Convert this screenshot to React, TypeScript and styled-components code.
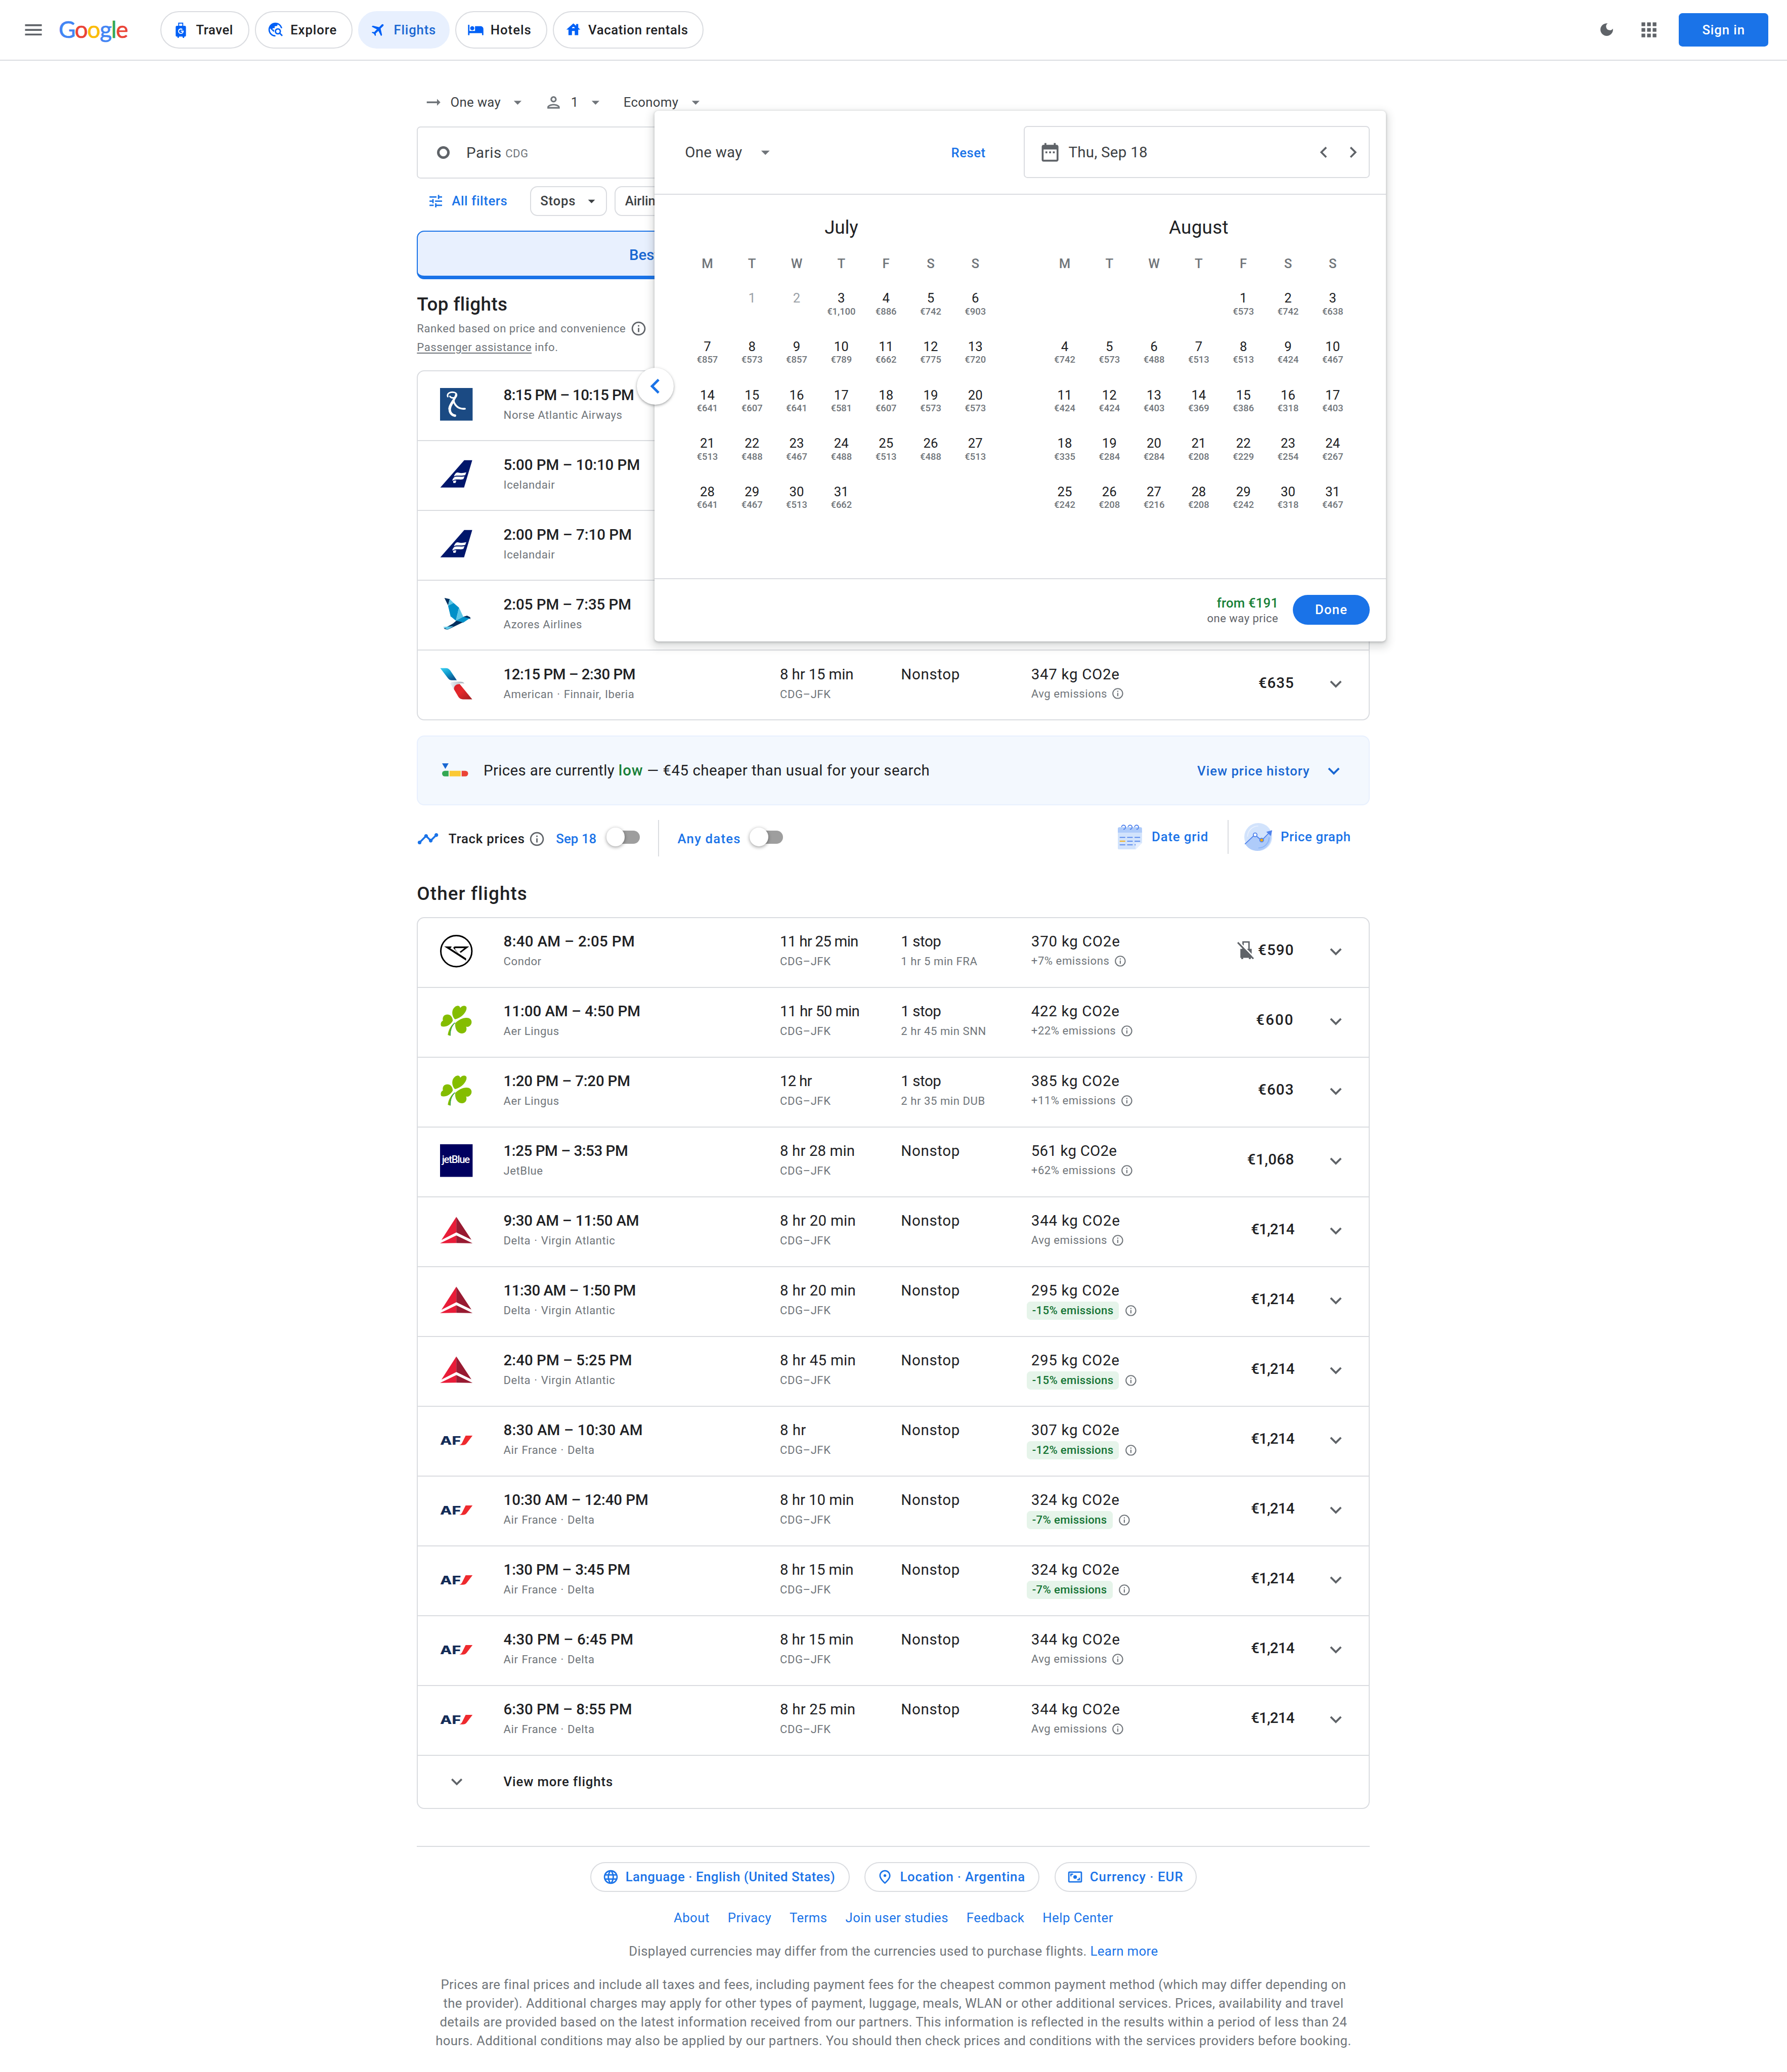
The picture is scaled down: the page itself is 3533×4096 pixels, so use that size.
import React, { useLayoutEffect, useRef } from "react";
import styled, { createGlobalStyle, css } from "styled-components";
import {
  MdApps,
  MdArrowDropDown,
  MdArrowRightAlt,
  MdChevronLeft,
  MdChevronRight,
  MdDarkMode,
  MdDateRange,
  MdExpandMore,
  MdFlight,
  MdHotel,
  MdHouse,
  MdLanguage,
  MdMenu,
  MdOutlineInfo,
  MdOutlinePerson,
  MdOutlinePlace,
  MdTimeline,
  MdTravelExplore,
  MdTune,
} from "react-icons/md";

const color = {
  ink: "#202124",
  body: "#3c4043",
  muted: "#70757a",
  icon: "#5f6368",
  faint: "#9aa0a6",
  line: "#dadce0",
  blue: "#1a73e8",
  deepBlue: "#1967d2",
  tint: "#e8f0fe",
  green: "#188038",
};

const hairline = `1.1px solid ${color.line}`;

const GlobalStyle = createGlobalStyle`
  html, body { margin: 0; background: #fff; overflow: hidden; }
  * { box-sizing: border-box; }
  svg { display: block; flex: none; }
`;

const Page = styled.div`
  position: relative;
  zoom: 1.84;
  width: 1920px;
  height: 2226px;
  overflow: hidden;
  background: #fff;
  color: ${color.ink};
  font-family: Roboto, "Liberation Sans", sans-serif;
  font-size: 14px;
`;

/* ---------- text ---------- */

const FitSpan = styled.span`
  white-space: nowrap;
`;

/** A single line of text tracked so that it sets to the given width. */
function Fit({ w, children }: { w: number; children: string }) {
  const ref = useRef<HTMLSpanElement>(null);
  useLayoutEffect(() => {
    const el = ref.current;
    const ctx = document.createElement("canvas").getContext("2d");
    if (!el || !ctx) return;
    const style = getComputedStyle(el);
    ctx.font = `${style.fontWeight} 100px ${style.fontFamily}`;
    const natural = (ctx.measureText(children).width * parseFloat(style.fontSize)) / 100;
    el.style.letterSpacing = `${(w - natural) / children.length}px`;
  }, [w, children]);
  return <FitSpan ref={ref}>{children}</FitSpan>;
}

/* ---------- header ---------- */

const Header = styled.header`
  display: flex;
  align-items: center;
  height: 65px;
  padding: 0 20px 0 24px;
  border-bottom: ${hairline};
  color: ${color.icon};
`;

const Logo = styled.div`
  width: 109.5px;
  margin: -1px 0 0 15px;
  font: 400 25px/30px Lato, sans-serif;
  -webkit-text-stroke: 0.35px currentColor;
  letter-spacing: -0.75px;
`;

const Tint = styled.span<{ $c: string }>`
  color: ${(p) => p.$c};
`;

const Nav = styled.nav`
  display: flex;
  gap: 6px;
`;

const NavChip = styled.a<{ $w: number; $active?: boolean }>`
  display: flex;
  align-items: center;
  gap: 7px;
  width: ${(p) => p.$w}px;
  height: 40px;
  padding-left: 12px;
  border: 1.1px solid ${(p) => (p.$active ? color.tint : color.line)};
  border-radius: 20px;
  background: ${(p) => (p.$active ? color.tint : "#fff")};
  color: ${(p) => (p.$active ? color.deepBlue : color.ink)};
  font-weight: 500;
  white-space: nowrap;
  svg {
    color: #0060f6;
  }
`;

const HeaderTools = styled.div`
  display: flex;
  align-items: center;
  margin-left: auto;
`;

const Moon = styled(MdDarkMode)`
  margin-right: 24px;
`;

const SignIn = styled.button`
  width: 96px;
  height: 36px;
  margin-left: 20.5px;
  border: 0;
  border-radius: 4px;
  background: ${color.blue};
  color: #fff;
  font: 500 14px Roboto, sans-serif;
`;

const LuggageIcon = () => (
  <svg width="18" height="18" viewBox="0 0 24 24">
    <path
      fill="currentColor"
      fillRule="evenodd"
      d="M8.2 2h7.2v4.600h2.200c1 0 1.700.7 1.700 1.700v12c0 1-.7 1.700-1.700 1.700h-.5l-.6 2h-1.500l-.7-2h-4.800l-.7 2H7.500L6.900 22h-.6c-1 0-1.700-.7-1.700-1.700v-12c0-1 .7-1.700 1.700-1.700h1.900zM9.600 3.400v3.200h4.400V3.400zM12 10.200a4 4 0 1 0 4 4.700v-1.400h-4v1.500h2.400a2.500 2.500 0 1 1-.8-2.500l1-1.100a4 4 0 0 0-2.600-1.200z"
    />
  </svg>
);

const Tilted = styled.span`
  display: flex;
  transform: rotate(45deg);
`;

/* ---------- search form ---------- */

const Main = styled.main`
  width: 1024px;
  margin: 0 auto;
  padding-top: 27px;
`;

const Row = styled.div`
  display: flex;
  align-items: center;
`;

const Options = styled(Row)`
  height: 36px;
  padding-left: 7px;
  color: ${color.body};
  svg {
    color: ${color.muted};
  }
`;

const Option = styled(Row)<{ $w: number; $caret: number; $gap?: number }>`
  width: ${(p) => p.$w}px;
  & > span {
    margin-left: ${(p) => p.$gap ?? 0}px;
  }
  & > svg:last-child {
    margin-left: ${(p) => p.$caret}px;
  }
`;

const SearchBox = styled(Row)`
  height: 56px;
  margin-top: 8px;
  padding-left: 20.5px;
  border: ${hairline};
  border-radius: 4px;
  color: ${color.body};
  font-size: 16px;
`;

const OriginDot = styled.i`
  width: 13.5px;
  height: 13.5px;
  margin-right: 18px;
  border: 2.8px solid ${color.icon};
  border-radius: 50%;
`;

const Code = styled.small`
  padding: 2px 0 0 4px;
  color: ${color.muted};
  font-size: 12px;
`;

const Filters = styled(Row)`
  height: 32px;
  margin-top: 8px;
  padding-left: 11.5px;
  gap: 8.5px;
  font-weight: 500;
`;

const AllFilters = styled(Row)`
  width: 101.5px;
  gap: 8px;
  color: ${color.blue};
`;

const FilterChip = styled(Row)<{ $w: number }>`
  width: ${(p) => p.$w}px;
  height: 32px;
  padding: 0 6.5px 0 10px;
  justify-content: space-between;
  border: ${hairline};
  border-radius: 8px;
  color: ${color.body};
`;

const Tabs = styled.div`
  display: grid;
  grid-template-columns: 1fr 1fr;
  height: 52px;
  margin-top: 16px;
  border: ${hairline};
  border-radius: 8px;
`;

const BestTab = styled.div`
  margin: -1.1px;
  padding: 13px 0 0 227px;
  border: 1.1px solid ${color.blue};
  border-bottom-width: 4px;
  border-radius: 8px 0 0 8px;
  background: ${color.tint};
  color: ${color.deepBlue};
  font: 500 16px/24px Roboto, sans-serif;
`;

/* ---------- flight lists ---------- */

const Heading = styled.h2<{ $top: number }>`
  margin: ${(p) => p.$top}px 0 0;
  font: 500 20px/24px Roboto, sans-serif;
`;

const Notes = styled.div`
  margin-top: 4px;
`;

const Note = styled(Row)`
  height: 20px;
  gap: 4.5px;
  color: ${color.muted};
  font-size: 12px;
  letter-spacing: 0.3px;
  white-space: pre;
  u {
    text-underline-offset: 1.5px;
  }
  svg {
    color: ${color.icon};
  }
`;

const FlightList = styled.section<{ $top: number }>`
  margin-top: ${(p) => p.$top}px;
  border: ${hairline};
  border-radius: 8px;
`;

const FlightRow = styled.article`
  display: grid;
  grid-template-columns: 68px 297px 130px 140px 160px 1fr 80.3px;
  height: 75px;
  padding-left: 24px;
  border-bottom: ${hairline};
  &:last-child {
    height: 74px;
    border-bottom: 0;
  }
`;

const AirlineLogo = styled.div`
  width: 35px;
  height: 35px;
  margin-top: 18px;
`;

const Cell = styled.div<{ $strong?: boolean }>`
  padding-top: 13.5px;
  font-size: 16px;
  line-height: 24px;
  font-weight: ${(p) => (p.$strong ? 500 : 400)};
  white-space: nowrap;
`;

const Sub = styled.div<{ $top?: number; $wide?: boolean }>`
  display: flex;
  align-items: center;
  height: 18px;
  margin-top: ${(p) => p.$top ?? 0.3}px;
  gap: 4.5px;
  color: ${color.muted};
  font-size: 12px;
  font-weight: 400;
  line-height: 18px;
  letter-spacing: 0.3px;
  word-spacing: ${(p) => (p.$wide ? 0.6 : 0)}px;
`;

const GreenBadge = styled.span`
  height: 20px;
  margin-left: -5px;
  margin-right: 1px;
  padding: 0 6px;
  border-radius: 4px;
  background: #e6f4ea;
  color: #137333;
  font-weight: 500;
  line-height: 20px;
  letter-spacing: 0.2px;
`;

const Price = styled(Row)`
  justify-content: flex-end;
  gap: 4px;
  height: 69px;
  font-size: 16px;
  font-weight: 500;
  svg {
    color: ${color.icon};
  }
`;

const NoCarryOnIcon = () => (
  <svg width="18" height="20" viewBox="0 0 18 20">
    <path fill="none" stroke="currentColor" strokeWidth="1.500" d="M6.300 9V1.200h6.400V9" />
    <path fill="currentColor" d="M3.400 8.600h12.200v9.600h-1V20h-2v-1.800H6.400V20h-2v-1.800h-1z" />
    <path stroke="#fff" strokeWidth="1.500" d="M1.700.7 18.500 18" />
    <path stroke="currentColor" strokeWidth="1.700" d="M.6 1.700 17.400 19.200" />
  </svg>
);

const Expand = styled.div`
  padding: 23.5px 0 0 32px;
  color: ${color.icon};
`;

const MoreRow = styled(Row)`
  height: 56px;
  padding-left: 29.7px;
  gap: 38.3px;
  font-weight: 500;
  svg {
    color: ${color.icon};
  }
`;

/* ---------- price insights ---------- */

const InsightCard = styled(Row)`
  height: 75px;
  margin-top: 16px;
  padding: 0 25.5px 0 26px;
  border: 1.1px solid ${color.tint};
  border-radius: 8px;
  background: #f3f8fe;
  font-size: 16px;
`;

const InsightText = styled.span`
  margin-left: 16.5px;
  b {
    color: ${color.green};
    font-weight: 500;
  }
`;

const HistoryLink = styled(Row)`
  margin-left: auto;
  padding-top: 1px;
  gap: 13px;
  color: ${color.deepBlue};
  font-size: 14px;
  font-weight: 500;
`;

const TrackRow = styled(Row)`
  height: 40px;
  margin-top: 16px;
  font-weight: 500;
`;

const TrackLabel = styled.span`
  margin: 0 4px 0 10px;
`;

const BlueText = styled.span<{ $l: number }>`
  margin-left: ${(p) => p.$l}px;
  color: ${color.blue};
`;

const ToggleTrack = styled.span<{ $l: number }>`
  width: 35px;
  height: 14px;
  margin-left: ${(p) => p.$l}px;
  margin-top: -3.5px;
  border-radius: 7px;
  background: #9e9e9e;
`;

const ToggleThumb = styled.span`
  display: block;
  width: 20px;
  height: 20px;
  margin: -3px 0 0 -1px;
  border-radius: 50%;
  background: #fff;
  box-shadow: 0 1px 4px rgba(0, 0, 0, 0.4);
`;

const Toggle = ({ left }: { left: number }) => (
  <ToggleTrack $l={left}>
    <ToggleThumb />
  </ToggleTrack>
);

const Rule = styled.i<{ $h: number; $m: string }>`
  align-self: flex-start;
  width: 1.1px;
  height: ${(p) => p.$h}px;
  margin: ${(p) => p.$m};
  background: ${color.line};
`;

const ToolLinks = styled(Row)`
  margin: -4px 20.5px 0 auto;
  height: 40px;
`;

const CalendarArt = () => (
  <svg width="26" height="27" viewBox="0 0 156 160">
    <path fill="#d2e3fc" d="M0 40h156v78l-42 42H10q-10 0-10-10z" />
    <path fill="#aecbfa" d="M10 16h136q10 0 10 10v25H0V26q0-10 10-10z" />
    <path fill="#e8f0fe" d="M114 160v-32q0-10 10-10h32z" />
    <g fill="none" stroke="#4f82ec" strokeWidth="6">
      <path d="M24 15a13 13 0 1 1 12 14M66 15a13 13 0 1 1 12 14M108 15a13 13 0 1 1 12 14" />
      <path d="M12 82h36M60 82h36M108 82h36M60 106h36M108 106h36M12 130h36M60 130h36M108 130h7" />
      <path stroke="#f9ab00" d="M12 106h36" />
    </g>
  </svg>
);

const GraphArt = () => (
  <svg width="30" height="30" viewBox="0 0 180 180">
    <circle cx="90" cy="90" r="90" fill="#d2e3fc" />
    <path fill="#aecbfa" d="M5 134 68 72l44 38 58-44A90 90 0 0 1 5 134z" />
    <g fill="none" strokeWidth="6">
      <path stroke="#e8f0fe" d="M21 88a69 69 0 0 1 69-69" />
      <path stroke="#8ab4f8" d="M160 92a69 69 0 0 1-69 69" />
      <path stroke="#4f82ec" d="M4 136 62 81M78 84l26 22M120 104l44-44" />
      <circle cx="70" cy="76" r="12" stroke="#4f82ec" fill="#fff" />
      <circle cx="112" cy="110" r="12" stroke="#4f82ec" fill="#f9ab00" />
    </g>
    <path fill="#4f82ec" d="m180 46-8 38-30-27z" />
  </svg>
);

const GaugeArt = () => (
  <svg width="28" height="15" viewBox="0 0 28 15">
    <path fill={color.deepBlue} d="M0 0h7L3.500 6z" />
    <path fill="#34a853" d="M3 8h4v6H3a3 3 0 0 1 0-6z" />
    <path fill="#fbc934" d="M8 8h12v6H8z" />
    <path fill="#ea4335" d="M21 8h4a3 3 0 0 1 0 6h-4z" />
  </svg>
);

/* ---------- airline marks ---------- */

const MarkSvg = styled.svg`
  width: 35px;
  height: 35px;
  overflow: visible;
`;

const Mark = ({ children }: { children: React.ReactNode }) => <MarkSvg viewBox="0 0 35 35">{children}</MarkSvg>;

const marks: Record<string, React.ReactNode> = {
  norse: (
    <Mark>
      <path fill="#1b4a83" d="M0 0h35v35H0z" />
      <g fill="none" stroke="#fff" strokeLinecap="round" strokeLinejoin="round">
        <path strokeWidth="1.600" d="M8.300 9.300C7 5.500 11.500 4 15 4.700c3.800.9 3.500 4.800.2 5.700-2 .6-3.800-.2-4.600-1.400" />
        <path strokeWidth="2.300" d="M17.300 7c-.4 4.500-6 8.500-7.300 15" />
        <path strokeWidth="2.700" d="M14.500 14c-3.300 4-5 7.300-3.800 11.200.8 2.500 2.600 4 5.300 4.500" />
        <path strokeWidth="2" d="M14.500 14c1.700 5 5 8.900 12.200 8.300" />
      </g>
    </Mark>
  ),
  icelandair: (
    <Mark>
      <path fill="#00166b" d="M26 2.600h8.600L25.800 32H.3z" />
      <path
        fill="#fff"
        d="M19 15.800c3 1 6 .6 9.200-.2l-1.200 3c-3.600 1-6.500.3-9.500.6-1.200.1-2 .6-2.600 1 .6-2 2-4.500 4.100-4.400zM16.500 20.400c3.400-.4 6.700.5 9.800-.4l-1.200 2.800c-2.500 1-5 .2-7.500.5-2 .2-3.500.8-4.500 1.400.5-2 1.600-4 3.400-4.300zM14 25c1-.5 2.200-.6 3.500-.5l-.9 2.500h-2.300z"
      />
    </Mark>
  ),
  azores: (
    <Mark>
      <path fill="#00305f" d="m4.700.5 5.700 1.300-1.800 6.700z" />
      <path fill="#5cc6e6" d="m10.400 1.800 4.200 4.200-6 3z" />
      <path fill="#0090c8" d="m14.600 6 5.800 5-3.400 14-5.700-4.800L8.600 9z" />
      <path fill="#5cc6e6" d="M20.400 11 25 20.800 17 25z" />
      <path fill="#0090c8" d="m17 25 8-4.200 7.300 1.400L25 27l-8-.4z" />
      <path fill="#00305f" d="m25 20.800 4-1.200 3.500 1.800v2.300l-1-1.200zM4 33.500 14 28l3.500-3 7 1.800L8 34.800z" />
      <path fill="#5cc6e6" d="m3.300 31.800 11.200-.9L8 34.800z" />
    </Mark>
  ),
  american: (
    <Mark>
      <defs>
        <linearGradient id="aaBlue" x1="0" y1="0" x2=".6" y2="1">
          <stop offset="0" stopColor="#3fd0f2" />
          <stop offset=".5" stopColor="#109fd0" />
          <stop offset="1" stopColor="#0c558f" />
        </linearGradient>
        <linearGradient id="aaRed" x1="0" y1="0" x2="1" y2="1">
          <stop offset="0" stopColor="#d9202b" />
          <stop offset=".45" stopColor="#e4282b" />
          <stop offset="1" stopColor="#9f1d21" />
        </linearGradient>
        <linearGradient id="aaGrey" x1="0" y1="0" x2="1" y2="0">
          <stop offset="0" stopColor="#eef1f6" />
          <stop offset="1" stopColor="#9dabb5" />
        </linearGradient>
      </defs>
      <path fill="url(#aaBlue)" d="M.2.900h6c2 0 3.300.8 4.600 2.400L18 14h-5.200c-1.900 0-3.300-.8-4.500-2.500z" />
      <path fill="url(#aaGrey)" d="M11 17.500c.6-1.400 2-2 4-2h6.500c2 0 3.800.6 4.700 2-3-.5-6-.2-8 1-2 1-3 2.600-3.200 5.500z" />
      <path fill="url(#aaRed)" d="M15 23.800c-.3-3 1.500-5.500 6-5.800L34.600 34.500H24.500c-2 0-3.500-.8-4.700-2.500z" />
    </Mark>
  ),
  condor: (
    <Mark>
      <circle cx="17.500" cy="17.500" r="16.700" fill="#fff" stroke="#000" strokeWidth="1.600" />
      <path d="M4.500 12.500h8l-1 1.800h-.8l17.300 11v2.400z" />
      <path d="M14.300 14.300c0-1.200.8-1.800 2-1.800h15l-9 6.800-1.300-1 5.200-4h-9.400c-1 0-.9.9.2 2.300l4 4.700z" />
    </Mark>
  ),
  aerlingus: (
    <Mark>
      <g fill="#84bd00">
        <path d="M16 15.800C12.200 12 12 5 16.500 2 19 .6 21 .9 21.700 3.500 23.600.8 28 .2 28.500 3.300 28.700 8.500 22.500 14.500 16 15.800z" />
        <path d="M13.700 17.200C13.500 13 11 10.600 8 10.600c-4 0-5.700 3-4.900 6.600C1 18 .1 21 1.400 23.300 6 24.700 11.500 21.600 13.700 17.200z" />
        <path d="M16.300 20c3.700-4.200 10.500-7 14.800-5.400 4 1.700 3.600 7-.1 8.900-1 .5-2 .5-3 .2 1.500 4.300-1 7.300-4.500 7.300-5-.2-7.700-5-7.200-11z" />
      </g>
      <path fill="#84bd00" d="M16 19.300C12 21.500 9 27 8.300 32.600l2.900.9c-.2-6 1.300-10 4.800-13.500z" />
      <path fill="none" stroke="#2fa04e" strokeWidth=".8" d="M16 19.500c-3.700 3-5.200 8-5.100 13.800" />
    </Mark>
  ),
  jetblue: (
    <Mark>
      <path fill="#00005f" d="M0 0h35v35H0z" />
      <text x="2" y="20.300" fill="#fff" fontFamily="Roboto, sans-serif" fontWeight="500" fontSize="11" letterSpacing="-0.65">
        jetBlue
      </text>
    </Mark>
  ),
  delta: (
    <Mark>
      <path fill="#e81c38" d="M17.500 3v16.700L1.500 27.800zM17.500 22.900v8.200L0 31.400z" />
      <path fill="#981a31" d="M17.500 3v16.700l16.200 7.900zM17.500 22.900v8.200l17.500.3z" />
    </Mark>
  ),
  airfrance: (
    <Mark>
      <text x="0" y="23.100" fill="#142c57" fontFamily="Inter, sans-serif" fontWeight="800" fontSize="12.500" textLength="22.400" lengthAdjust="spacingAndGlyphs">
        AF
      </text>
      <path fill="#ee2a2e" d="M27.500 13h7.400l-6.300 8.300c-1.200 1.500-2.300 1.900-4 1.900h-4c1.300-.2 2-.8 2.800-1.900z" />
    </Mark>
  ),
};

/* ---------- flight data ---------- */

type Flight = {
  mark: keyof typeof marks;
  time: string;
  timeW: number;
  airline: string;
  duration?: string;
  durationW?: number;
  stops?: string;
  layover?: string;
  co2?: string;
  co2W?: number;
  delta?: string;
  price?: string;
  priceW?: number;
  noBags?: boolean;
};

const topFlights: Flight[] = [
  { mark: "norse", time: "8:15 PM – 10:15 PM", timeW: 140, airline: "Norse Atlantic Airways" },
  { mark: "icelandair", time: "5:00 PM – 10:10 PM", timeW: 146.5, airline: "Icelandair" },
  { mark: "icelandair", time: "2:00 PM – 7:10 PM", timeW: 137.7, airline: "Icelandair" },
  { mark: "azores", time: "2:05 PM – 7:35 PM", timeW: 137.2, airline: "Azores Airlines" },
  { mark: "american", time: "12:15 PM – 2:30 PM", timeW: 141.5, airline: "American · Finnair, Iberia", duration: "8 hr 15 min", durationW: 79, stops: "Nonstop", co2: "347 kg CO2e", co2W: 95, delta: "Avg emissions", price: "€635", priceW: 38.5 },
];

const otherFlights: Flight[] = [
  { mark: "condor", time: "8:40 AM – 2:05 PM", timeW: 141, airline: "Condor", duration: "11 hr 25 min", durationW: 84, stops: "1 stop", layover: "1 hr 5 min FRA", co2: "370 kg CO2e", co2W: 95.5, delta: "+7% emissions", price: "€590", priceW: 39, noBags: true },
  { mark: "aerlingus", time: "11:00 AM – 4:50 PM", timeW: 147, airline: "Aer Lingus", duration: "11 hr 50 min", durationW: 85.5, stops: "1 stop", layover: "2 hr 45 min SNN", co2: "422 kg CO2e", co2W: 95, delta: "+22% emissions", price: "€600", priceW: 41 },
  { mark: "aerlingus", time: "1:20 PM – 7:20 PM", timeW: 136, airline: "Aer Lingus", duration: "12 hr", durationW: 34, stops: "1 stop", layover: "2 hr 35 min DUB", co2: "385 kg CO2e", co2W: 95, delta: "+11% emissions", price: "€603", priceW: 39 },
  { mark: "jetblue", time: "1:25 PM – 3:53 PM", timeW: 133.5, airline: "JetBlue", duration: "8 hr 28 min", durationW: 80.5, stops: "Nonstop", co2: "561 kg CO2e", co2W: 92, delta: "+62% emissions", price: "€1,068", priceW: 50.5 },
  { mark: "delta", time: "9:30 AM – 11:50 AM", timeW: 145.5, airline: "Delta · Virgin Atlantic", duration: "8 hr 20 min", durationW: 81.5, stops: "Nonstop", co2: "344 kg CO2e", co2W: 95.5, delta: "Avg emissions", price: "€1,214", priceW: 46.5 },
  { mark: "delta", time: "11:30 AM – 1:50 PM", timeW: 142, airline: "Delta · Virgin Atlantic", duration: "8 hr 20 min", durationW: 81.5, stops: "Nonstop", co2: "295 kg CO2e", co2W: 95, delta: "-15% emissions", price: "€1,214", priceW: 46.5 },
  { mark: "delta", time: "2:40 PM – 5:25 PM", timeW: 138, airline: "Delta · Virgin Atlantic", duration: "8 hr 45 min", durationW: 81.5, stops: "Nonstop", co2: "295 kg CO2e", co2W: 95, delta: "-15% emissions", price: "€1,214", priceW: 46.5 },
  { mark: "airfrance", time: "8:30 AM – 10:30 AM", timeW: 149.5, airline: "Air France · Delta", duration: "8 hr", durationW: 28, stops: "Nonstop", co2: "307 kg CO2e", co2W: 95, delta: "-12% emissions", price: "€1,214", priceW: 46.5 },
  { mark: "airfrance", time: "10:30 AM – 12:40 PM", timeW: 155.5, airline: "Air France · Delta", duration: "8 hr 10 min", durationW: 79.5, stops: "Nonstop", co2: "324 kg CO2e", co2W: 95, delta: "-7% emissions", price: "€1,214", priceW: 46.5 },
  { mark: "airfrance", time: "1:30 PM – 3:45 PM", timeW: 136, airline: "Air France · Delta", duration: "8 hr 15 min", durationW: 79, stops: "Nonstop", co2: "324 kg CO2e", co2W: 95, delta: "-7% emissions", price: "€1,214", priceW: 46.5 },
  { mark: "airfrance", time: "4:30 PM – 6:45 PM", timeW: 139.5, airline: "Air France · Delta", duration: "8 hr 15 min", durationW: 79, stops: "Nonstop", co2: "344 kg CO2e", co2W: 95.5, delta: "Avg emissions", price: "€1,214", priceW: 46.5 },
  { mark: "airfrance", time: "6:30 PM – 8:55 PM", timeW: 138, airline: "Air France · Delta", duration: "8 hr 25 min", durationW: 81, stops: "Nonstop", co2: "344 kg CO2e", co2W: 95.5, delta: "Avg emissions", price: "€1,214", priceW: 46.5 },
];

function FlightItem({ f }: { f: Flight }) {
  const less = f.delta?.startsWith("-");
  return (
    <FlightRow>
      <AirlineLogo>{marks[f.mark]}</AirlineLogo>
      <Cell $strong>
        <Fit w={f.timeW}>{f.time}</Fit>
        <Sub $wide={f.airline.includes("·")}>{f.airline}</Sub>
      </Cell>
      {f.duration && (
        <>
          <Cell>
            <Fit w={f.durationW!}>{f.duration}</Fit>
            <Sub>CDG–JFK</Sub>
          </Cell>
          <Cell>
            <Fit w={f.stops === "Nonstop" ? 63.5 : 43}>{f.stops!}</Fit>
            {f.layover && <Sub>{f.layover}</Sub>}
          </Cell>
          <Cell>
            <Fit w={f.co2W!}>{f.co2!}</Fit>
            <Sub $top={less ? 0.5 : -0.4}>
              {less ? <GreenBadge>{f.delta}</GreenBadge> : f.delta}
              <MdOutlineInfo size={14} />
            </Sub>
          </Cell>
          <Price>
            {f.noBags && <NoCarryOnIcon />}
            <Fit w={f.priceW!}>{f.price!}</Fit>
          </Price>
          <Expand>
            <MdExpandMore size={25} />
          </Expand>
        </>
      )}
    </FlightRow>
  );
}

/* ---------- date picker ---------- */

const Dialog = styled.div`
  position: absolute;
  top: 119px;
  left: 703px;
  width: 786px;
  height: 570px;
  border-radius: 4px;
  background: #fff;
  box-shadow: 0 1px 3px rgba(60, 64, 67, 0.3), 0 4px 8px 3px rgba(60, 64, 67, 0.15);
`;

const DialogTop = styled(Row)`
  height: 90px;
  padding: 0 17px 0 33px;
  border-bottom: ${hairline};
  color: ${color.body};
  font-size: 16px;
`;

const Caret = styled.span`
  margin-left: 14px;
  color: ${color.muted};
`;

const Reset = styled.span`
  margin-left: auto;
  margin-right: 41px;
  padding-top: 1px;
  color: ${color.blue};
  font-size: 14px;
  font-weight: 500;
`;

const DateField = styled(Row)`
  width: 372px;
  height: 56px;
  padding: 0 5px 0 15px;
  border: ${hairline};
  border-radius: 4px;
  & > span {
    flex: 1;
    padding-left: 8px;
  }
  svg {
    color: ${color.icon};
  }
  svg:last-child {
    margin-left: 7.5px;
  }
`;

const Months = styled.div`
  display: flex;
  gap: 48px;
  height: 412px;
  padding: 23.6px 33px 0;
`;

const Month = styled.div`
  width: 336px;
  text-align: center;
`;

const MonthName = styled.h3`
  margin: 0;
  font: 400 20px/24px Roboto, sans-serif;
`;

const Grid = styled.div`
  display: grid;
  grid-template-columns: repeat(7, 48px);
  grid-auto-rows: 52px;
`;

const Weekdays = styled(Grid)`
  margin-top: 14.5px;
  grid-auto-rows: 37.5px;
  color: ${color.muted};
  font-weight: 500;
  line-height: 24px;
`;

const Day = styled.div<{ $past?: boolean; $start?: number }>`
  ${(p) => p.$start && css`
    grid-column-start: ${p.$start};
  `}
  padding-top: 4px;
  color: ${(p) => (p.$past ? color.faint : color.ink)};
  line-height: 16px;
  small {
    display: block;
    color: ${color.muted};
    font-size: 10px;
    font-weight: 500;
    line-height: 12px;
  }
`;

const DialogFoot = styled(Row)`
  height: 67px;
  justify-content: flex-end;
  padding-right: 17px;
  border-top: ${hairline};
`;

const FromPrice = styled.div`
  margin-right: 15.5px;
  padding-top: 2.5px;
  text-align: right;
  color: ${color.green};
  font-weight: 500;
  line-height: 17px;
  small {
    display: block;
    color: ${color.icon};
    font-size: 12px;
    font-weight: 400;
    line-height: 16px;
  }
`;

const Done = styled.button`
  width: 83px;
  height: 32px;
  border: 0;
  border-radius: 16px;
  background: ${color.blue};
  color: #fff;
  font: 500 14px Roboto, sans-serif;
`;

const PrevMonth = styled.button`
  position: absolute;
  top: 276px;
  left: -19px;
  display: grid;
  place-items: center;
  width: 40px;
  height: 40px;
  padding: 0;
  border: 0;
  border-radius: 50%;
  background: #fff;
  color: ${color.blue};
  box-shadow: 0 1px 2px rgba(60, 64, 67, 0.3), 0 1px 3px 1px rgba(60, 64, 67, 0.15);
`;

const months = [
  {
    name: "July",
    width: 36,
    start: 2,
    fares: ["", "", "1,100", "886", "742", "903", "857", "573", "857", "789", "662", "775", "720", "641", "607", "641", "581", "607", "573", "573", "513", "488", "467", "488", "513", "488", "513", "641", "467", "513", "662"],
  },
  {
    name: "August",
    width: 64,
    start: 5,
    fares: ["573", "742", "638", "742", "573", "488", "513", "513", "424", "467", "424", "424", "403", "369", "386", "318", "403", "335", "284", "284", "208", "229", "254", "267", "242", "208", "216", "208", "242", "318", "467"],
  },
];

function DatePicker() {
  return (
    <Dialog>
      <DialogTop>
        <Fit w={61.5}>One way</Fit>
        <Caret>
          <MdArrowDropDown size={22} />
        </Caret>
        <Reset>
          <Fit w={37}>Reset</Fit>
        </Reset>
        <DateField>
          <MdDateRange size={24} />
          <span>
            <Fit w={85}>Thu, Sep 18</Fit>
          </span>
          <MdChevronLeft size={24} />
          <MdChevronRight size={24} />
        </DateField>
      </DialogTop>
      <Months>
        {months.map((m) => (
          <Month key={m.name}>
            <MonthName>
              <Fit w={m.width}>{m.name}</Fit>
            </MonthName>
            <Weekdays>
              {"MTWTFSS".split("").map((d, i) => (
                <span key={i}>{d}</span>
              ))}
            </Weekdays>
            <Grid>
              {m.fares.map((fare, i) => (
                <Day key={i} $past={!fare} $start={i === 0 ? m.start : undefined}>
                  {i + 1}
                  {fare && <small>€{fare}</small>}
                </Day>
              ))}
            </Grid>
          </Month>
        ))}
      </Months>
      <DialogFoot>
        <FromPrice>
          <Fit w={66}>from €191</Fit>
          <small>
            <Fit w={76.5}>one way price</Fit>
          </small>
        </FromPrice>
        <Done>
          <Fit w={35}>Done</Fit>
        </Done>
      </DialogFoot>
      <PrevMonth>
        <MdChevronLeft size={32} />
      </PrevMonth>
    </Dialog>
  );
}

/* ---------- footer ---------- */

const Footer = styled.footer`
  margin-top: 40px;
  padding-top: 16px;
  border-top: ${hairline};
  color: ${color.muted};
  line-height: 20px;
  letter-spacing: 0.2px;
  text-align: center;
`;

const FooterChips = styled(Row)`
  justify-content: center;
  gap: 16px;
`;

const FooterChip = styled(Row)<{ $w: number }>`
  width: ${(p) => p.$w}px;
  height: 32px;
  padding-left: 12px;
  gap: 7px;
  border: ${hairline};
  border-radius: 16px;
  color: ${color.blue};
  font-weight: 500;
`;

const FooterLinks = styled(Row)`
  justify-content: center;
  gap: 19.5px;
  margin-top: 18px;
  color: ${color.blue};
  letter-spacing: 0.25px;
`;

const Paragraph = styled.p`
  width: 990px;
  margin: 16px auto 0;
  a {
    color: ${color.blue};
  }
`;

const CurrencyIcon = () => (
  <svg width="18" height="18" viewBox="0 0 24 24" fill="none" stroke="currentColor" strokeWidth="2">
    <rect x="3" y="5" width="18" height="14" rx="1" />
    <path d="M6 11V8h3M18 13v3h-3" strokeWidth="1.800" />
    <circle cx="12" cy="12" r="2.600" fill="currentColor" stroke="none" />
  </svg>
);

/* ---------- page ---------- */

export default function App() {
  return (
    <Page>
      <GlobalStyle />
      <Header>
        <MdMenu size={24} />
        <Logo>
          <Tint $c="#4285f4">G</Tint>
          <Tint $c="#ea4335">o</Tint>
          <Tint $c="#fbbc05">o</Tint>
          <Tint $c="#4285f4">g</Tint>
          <Tint $c="#34a853">l</Tint>
          <Tint $c="#ea4335">e</Tint>
        </Logo>
        <Nav>
          <NavChip $w={95.5}>
            <LuggageIcon />
            <Fit w={40}>Travel</Fit>
          </NavChip>
          <NavChip $w={105}>
            <MdTravelExplore size={18} />
            <Fit w={50}>Explore</Fit>
          </NavChip>
          <NavChip $w={98} $active>
            <Tilted>
              <MdFlight size={18} />
            </Tilted>
            <Fit w={45.5}>Flights</Fit>
          </NavChip>
          <NavChip $w={99}>
            <MdHotel size={18} />
            <Fit w={44}>Hotels</Fit>
          </NavChip>
          <NavChip $w={162}>
            <MdHouse size={18} />
            <Fit w={107.5}>Vacation rentals</Fit>
          </NavChip>
        </Nav>
        <HeaderTools>
          <Moon size={18} />
          <MdApps size={24} />
          <SignIn>
            <Fit w={46}>Sign in</Fit>
          </SignIn>
        </HeaderTools>
      </Header>

      <Main>
        <Options>
          <Option $w={130} $caret={8.5} $gap={7}>
            <MdArrowRightAlt size={22} />
            <Fit w={54}>One way</Fit>
            <MdArrowDropDown size={20} />
          </Option>
          <Option $w={85} $caret={8.5} $gap={8.5}>
            <MdOutlinePerson size={20} />
            <span>1</span>
            <MdArrowDropDown size={20} />
          </Option>
          <Option $w={100} $caret={8.5}>
            <Fit w={59}>Economy</Fit>
            <MdArrowDropDown size={20} />
          </Option>
        </Options>
        <SearchBox>
          <OriginDot />
          <Fit w={38}>Paris</Fit>
          <Code>
            <Fit w={24.5}>CDG</Fit>
          </Code>
        </SearchBox>
        <Filters>
          <AllFilters>
            <MdTune size={18} />
            <Fit w={59.5}>All filters</Fit>
          </AllFilters>
          <FilterChip $w={82.5}>
            <Fit w={38}>Stops</Fit>
            <MdArrowDropDown size={18} />
          </FilterChip>
          <FilterChip $w={100}>Airlines</FilterChip>
        </Filters>
        <Tabs>
          <BestTab>Best</BestTab>
        </Tabs>

        <Heading $top={15}>
          <Fit w={97}>Top flights</Fit>
        </Heading>
        <Notes>
          <Note>
            <Fit w={224.5}>Ranked based on price and convenience</Fit>
            <MdOutlineInfo size={18} />
          </Note>
          <Note>
            <span>
              <u>Passenger assistance</u> info.
            </span>
          </Note>
        </Notes>
        <FlightList $top={15}>
          {topFlights.map((f) => (
            <FlightItem key={f.time} f={f} />
          ))}
        </FlightList>

        <InsightCard>
          <GaugeArt />
          <InsightText>
            <Fit w={145}>Prices are currently </Fit>
            <b>
              <Fit w={26.5}>low</Fit>
            </b>
            <Fit w={308}> — €45 cheaper than usual for your search</Fit>
          </InsightText>
          <HistoryLink>
            <Fit w={121}>View price history</Fit>
            <MdExpandMore size={25} />
          </HistoryLink>
        </InsightCard>

        <TrackRow>
          <MdTimeline size={24} color={color.blue} />
          <TrackLabel>
            <Fit w={82}>Track prices</Fit>
          </TrackLabel>
          <MdOutlineInfo size={18} color={color.icon} />
          <BlueText $l={11.5}>
            <Fit w={43.5}>Sep 18</Fit>
          </BlueText>
          <Toggle left={11.5} />
          <Rule $h={39} $m="0 20px 0 19.5px" />
          <BlueText $l={0}>
            <Fit w={68}>Any dates</Fit>
          </BlueText>
          <Toggle left={10.5} />
          <ToolLinks>
            <CalendarArt />
            <BlueText $l={10.5}>
              <Fit w={61}>Date grid</Fit>
            </BlueText>
            <Rule $h={36} $m="2px 17px 0 20.5px" />
            <GraphArt />
            <BlueText $l={9}>
              <Fit w={75.5}>Price graph</Fit>
            </BlueText>
          </ToolLinks>
        </TrackRow>

        <Heading $top={27}>
          <Fit w={118.5}>Other flights</Fit>
        </Heading>
        <FlightList $top={13}>
          {otherFlights.map((f) => (
            <FlightItem key={f.time} f={f} />
          ))}
          <MoreRow>
            <MdExpandMore size={24} />
            <Fit w={117.5}>View more flights</Fit>
          </MoreRow>
        </FlightList>

        <Footer>
          <FooterChips>
            <FooterChip $w={279}>
              <MdLanguage size={18} />
              <Fit w={225.5}>Language · English (United States)</Fit>
            </FooterChip>
            <FooterChip $w={188}>
              <MdOutlinePlace size={18} />
              <Fit w={134.5}>Location · Argentina</Fit>
            </FooterChip>
            <FooterChip $w={153}>
              <CurrencyIcon />
              <Fit w={100.5}>Currency · EUR</Fit>
            </FooterChip>
          </FooterChips>
          <FooterLinks>
            <span>About</span>
            <span>Privacy</span>
            <span>Terms</span>
            <span>Join user studies</span>
            <span>Feedback</span>
            <span>Help Center</span>
          </FooterLinks>
          <Paragraph>
            Displayed currencies may differ from the currencies used to purchase flights. <a>Learn more</a>
          </Paragraph>
          <Paragraph>
            Prices are final prices and include all taxes and fees, including payment fees for the cheapest common
            payment method (which may differ depending on the provider). Additional charges may apply for other types
            of payment, luggage, meals, WLAN or other additional services. Prices, availability and travel details are
            provided based on the latest information received from our partners. This information is reflected in the
            results within a period of less than 24 hours. Additional conditions may also be applied by our partners.
            You should then check prices and conditions with the services providers before booking.
          </Paragraph>
        </Footer>
      </Main>

      <DatePicker />
    </Page>
  );
}
